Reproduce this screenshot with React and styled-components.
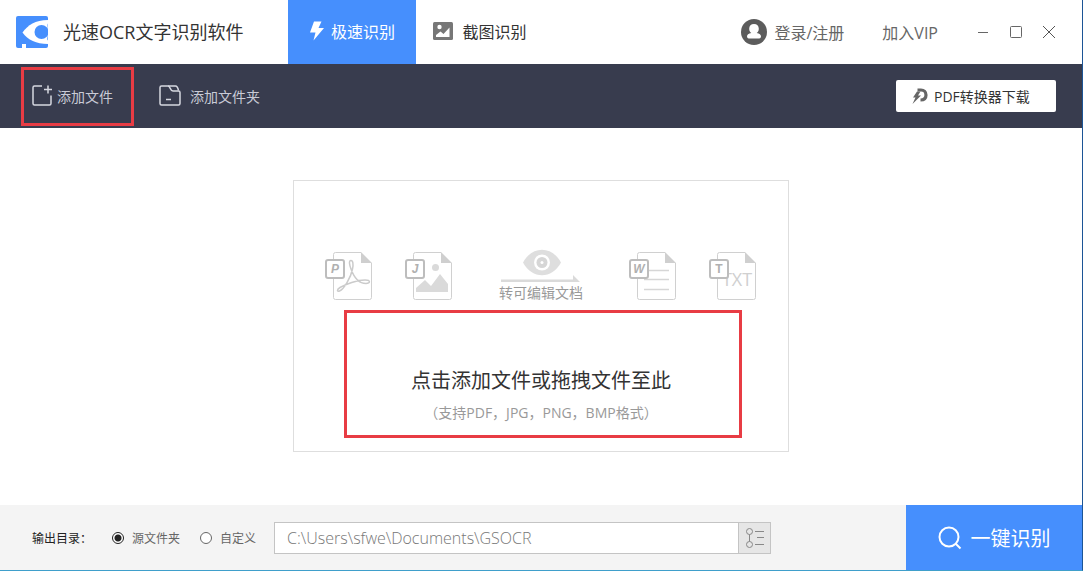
import React, { useState } from 'react';
import styled, { createGlobalStyle } from 'styled-components';

const GlobalStyle = createGlobalStyle`
  * {
    box-sizing: border-box;
  }

  body {
    margin: 0;
    background: #fff;
  }

  body, button, input {
    font-family: 'Open Sans', 'Noto Sans CJK SC', sans-serif;
  }

  button {
    padding: 0;
    border: none;
    background: none;
    cursor: pointer;
  }

  svg {
    display: block;
    flex: none;
  }
`;

const Page = styled.div`
  min-height: 100vh;
  display: flex;
  flex-direction: column;
  background: #fff;
  border-right: 1px solid #1c5596;
  border-bottom: 1px solid #3f9fcb;
`;

const Header = styled.header`
  height: 64px;
  display: flex;
  align-items: center;
  white-space: nowrap;
`;

const Brand = styled.div`
  width: 288px;
  padding-left: 16px;
  display: flex;
  align-items: center;
  gap: 15px;

  h1 {
    margin: 0;
    color: #333;
    font-size: 18px;
    font-weight: 400;
    line-height: 24px;
  }
`;

const Tab = styled.button`
  width: 128px;
  height: 64px;
  padding-bottom: 2px;
  display: flex;
  align-items: center;
  justify-content: center;
  gap: ${(props) => (props.$active ? '6px' : '9px')};
  background: ${(props) => (props.$active ? '#468ffd' : '#fff')};
  color: ${(props) => (props.$active ? '#fff' : '#333')};
  font-size: 16px;
`;

const HeaderRight = styled.div`
  margin-left: auto;
  padding-right: 26px;
  display: flex;
  align-items: center;
  gap: 38px;
`;

const HeaderLink = styled.a`
  display: flex;
  align-items: center;
  gap: 7px;
  color: #666;
  font-size: 16px;
  text-decoration: none;
`;

const WindowButtons = styled.div`
  display: flex;
  gap: 19px;

  button {
    width: 14px;
    height: 14px;
  }
`;

const Toolbar = styled.div`
  height: 64px;
  padding: 0 26px 0 21px;
  display: flex;
  align-items: center;
  background: #383c4e;
  white-space: nowrap;
`;

const ToolButton = styled.button`
  height: 59px;
  padding: 0 18px 1px 8px;
  display: flex;
  align-items: center;
  gap: ${(props) => (props.$marked ? '5px' : '9px')};
  border: 3px solid ${(props) => (props.$marked ? '#e83c44' : 'transparent')};
  color: #c9cbd6;
  font-size: 14px;

  & + & {
    margin-left: 14px;
  }
`;

const DownloadButton = styled.button`
  width: 160px;
  height: 32px;
  margin-left: auto;
  padding: 0 0 1px 16px;
  display: flex;
  align-items: center;
  gap: 5px;
  border-radius: 2px;
  background: #fff;
  color: #333;
  font-size: 14px;
`;

const Main = styled.main`
  flex: 1;
  padding: 24px 24px 26px;
  display: flex;
  align-items: center;
  justify-content: center;
`;

const DropZone = styled.section`
  width: 100%;
  max-width: 496px;
  padding: 68px 0 13px;
  border: 1px solid #dedede;
`;

const Formats = styled.div`
  padding: 0 31px;
  display: flex;
  align-items: center;
  justify-content: space-between;
`;

const FormatGroup = styled.div`
  display: flex;
  gap: 32px;
`;

const Convert = styled.div`
  display: flex;
  flex-direction: column;
  align-items: center;
  color: #999;
  font-size: 14px;
  line-height: 20px;
`;

const Hint = styled.button`
  width: 398px;
  margin: 7px 0 0 50px;
  padding: 54px 4px 12px 0;
  display: flex;
  flex-direction: column;
  align-items: center;
  gap: 8px;
  border: 3px solid #e83c44;

  strong {
    color: #333;
    font-size: 20px;
    font-weight: 400;
    line-height: 28px;
  }

  small {
    color: #999;
    font-size: 14px;
    line-height: 20px;
  }
`;

const Footer = styled.footer`
  height: 65px;
  padding-left: 32px;
  display: flex;
  align-items: center;
  background: #f4f4f4;
  white-space: nowrap;
`;

const Output = styled.fieldset`
  margin: 0;
  padding: 0;
  display: flex;
  align-items: center;
  gap: 20px;
  border: none;
  color: #222;
  font-size: 12px;
`;

const Radio = styled.label`
  display: flex;
  align-items: center;
  gap: 8px;
  color: #666;

  input {
    appearance: none;
    width: 12px;
    height: 12px;
    margin: 0;
    border: 1px solid #666;
    border-radius: 50%;
    background: #fff;
  }

  input:checked {
    border-color: #222;
    background: radial-gradient(circle, #222 3px, #fff 4px);
  }
`;

const PathField = styled.div`
  flex: 1;
  height: 32px;
  margin: 0 135px 0 18px;
  display: flex;
  border: 1px solid #c4c4c4;

  input {
    flex: 1;
    min-width: 0;
    padding: 0 12px;
    border: none;
    outline: none;
    background: #fff;
    color: #777;
    font-size: 16px;
    font-weight: 300;
  }

  button {
    width: 32px;
    display: flex;
    align-items: center;
    justify-content: center;
    border-left: 1px solid #c4c4c4;
    background: #e6e6e6;
  }
`;

const StartButton = styled.button`
  width: 176px;
  height: 65px;
  display: flex;
  align-items: center;
  justify-content: center;
  gap: 9px;
  background: #468ffd;
  color: #fff;
  font-size: 20px;
`;

const Logo = () => (
  <svg width="32" height="32" viewBox="0 0 32 32">
    <rect width="32" height="32" rx="2" fill="#468ffd" />
    <path d="M6.500 16.500C12 9 19 4 32 4V28C20 28 12 24 6.500 16.500Z" fill="#fff" />
    <path d="M32 7.500V24.500C30.500 23 32 21 32 16C32 11 31 9 32 7.500Z" fill="#468ffd" />
    <circle cx="25.500" cy="16" r="7" fill="#468ffd" />
    <path d="M6 28h4v4H6z" fill="#fff" />
  </svg>
);

const BoltIcon = () => (
  <svg width="16" height="20" viewBox="0 0 16 20" fill="#fff">
    <path d="M5 0.500H12.500L9.500 7H15L4.500 19.500L6.500 11.500H1Z" />
  </svg>
);

const PictureIcon = () => (
  <svg width="20" height="18" viewBox="0 0 20 18">
    <rect width="20" height="18" rx="1.500" fill="#777" />
    <circle cx="6.500" cy="5" r="2.200" fill="#fff" />
    <path d="M3 15V13L7.500 9.500L10.500 12L16.500 5.500V15Z" fill="#fff" />
  </svg>
);

const UserIcon = () => (
  <svg width="26" height="26" viewBox="0 0 26 26">
    <circle cx="13" cy="13" r="13" fill="#5c5c5c" />
    <path d="M13 5C16 5 17.800 7 17.800 9.700C17.800 11.700 17 13.200 15.700 14C18.500 14.600 20 15.800 20 17.500C20 19.200 18.500 19.500 17 19.500H9C7.500 19.500 6 19.200 6 17.500C6 15.800 7.500 14.600 10.300 14C9 13.200 8.200 11.700 8.200 9.700C8.200 7 10 5 13 5Z" fill="#fff" />
  </svg>
);

const AddFileIcon = () => (
  <svg width="20" height="21" viewBox="0 0 20 21" fill="none" stroke="#d5d7e0" strokeWidth="1.500">
    <path d="M10 1H2.500Q1 1 1 2.500V18.500Q1 20 2.500 20H17.500Q19 20 19 18.500V10.500" />
    <path d="M16 0.500V8.500M12 4.500H20" />
  </svg>
);

const FolderIcon = () => (
  <svg width="22" height="21" viewBox="0 0 22 21" fill="none" stroke="#d5d7e0" strokeWidth="1.500">
    <path d="M9 1H2.500Q1 1 1 2.500V18.500Q1 20 2.500 20H19.500Q21 20 21 18.500V7.500Q21 6 19.500 6H14C11 6 11.500 1 9 1Z" />
    <path d="M9 1H16.500Q18.500 1 19.500 5.500M7 14.500H12" />
  </svg>
);

const ConverterIcon = () => (
  <svg width="17" height="17" viewBox="0 0 17 17">
    <path d="M5.500 3H9C12 3 14 5 14 8C14 11 12 13 8.500 13" fill="none" stroke="#666" strokeWidth="3.200" />
    <path d="M5 4.500H8.500L6 8.500H9L0.500 17L3.500 10.500H1Z" fill="#666" />
  </svg>
);

const FileIcon = ({ letter, italic, children }) => (
  <svg width="48" height="48" viewBox="0 0 48 48" fill="none">
    <path d="M36 0.500H10.500Q8.500 0.500 8.500 2.500V45.500Q8.500 47.500 10.500 47.500H44.500Q46.500 47.500 46.500 45.500V11" stroke="#d0d0d0" />
    <path d="M36 0L47 11H36Z" fill="#cfcfcf" />
    {children}
    <rect x="1" y="8" width="18" height="18" rx="2" fill="#fff" stroke="#bdbdbd" strokeWidth="2" />
    <text
      x="10"
      y="21"
      textAnchor="middle"
      fill="#b0b0b0"
      fontFamily="Liberation Sans, sans-serif"
      fontSize="12"
      fontWeight="bold"
      fontStyle={italic ? 'italic' : 'normal'}
    >
      {letter}
    </text>
  </svg>
);

const EyeIcon = () => (
  <svg width="80" height="34" viewBox="0 0 80 34">
    <path d="M22 13.500C31 -3.500 51 -3.500 60 13.500C51 30.500 31 30.500 22 13.500Z" fill="#dedede" />
    <circle cx="41" cy="13.500" r="8" fill="#fff" />
    <circle cx="41" cy="13.500" r="5.500" fill="#d6d6d6" />
    <circle cx="41" cy="13.500" r="1.500" fill="#fff" />
    <path d="M0 30.500H72V26L79 33H0Z" fill="#dadada" />
  </svg>
);

const ListIcon = () => (
  <svg width="20" height="20" viewBox="0 0 20 20" fill="none" stroke="#888">
    <circle cx="4.500" cy="3.500" r="3" />
    <circle cx="4.500" cy="16.500" r="3" />
    <path d="M4.500 6.500V13.500M10 3.500H19M12 9.500H19M10 16.500H19" />
  </svg>
);

const SearchIcon = () => (
  <svg width="24" height="24" viewBox="0 0 24 24" fill="none" stroke="#fff" strokeWidth="2">
    <circle cx="11" cy="11" r="9.500" />
    <path d="M17.500 17.500L22.500 22.500" />
  </svg>
);

const App = () => {
  const [tab, setTab] = useState('fast');
  const [output, setOutput] = useState('source');
  const [path, setPath] = useState('C:\\Users\\sfwe\\Documents\\GSOCR');

  return (
    <>
      <GlobalStyle />
      <Page>
        <Header>
          <Brand>
            <Logo />
            <h1>光速OCR文字识别软件</h1>
          </Brand>
          <Tab $active={tab === 'fast'} onClick={() => setTab('fast')}>
            <BoltIcon />
            极速识别
          </Tab>
          <Tab $active={tab === 'shot'} onClick={() => setTab('shot')}>
            <PictureIcon />
            截图识别
          </Tab>
          <HeaderRight>
            <HeaderLink href="#login">
              <UserIcon />
              登录/注册
            </HeaderLink>
            <HeaderLink href="#vip">加入VIP</HeaderLink>
            <WindowButtons>
              <button aria-label="最小化">
                <svg width="14" height="14" stroke="#666"><path d="M2 7.500H12" /></svg>
              </button>
              <button aria-label="最大化">
                <svg width="14" height="14" stroke="#666" fill="none"><rect x="1.500" y="1.500" width="11" height="11" rx="1" /></svg>
              </button>
              <button aria-label="关闭">
                <svg width="14" height="14" stroke="#555"><path d="M1 1L13 13M13 1L1 13" /></svg>
              </button>
            </WindowButtons>
          </HeaderRight>
        </Header>

        <Toolbar>
          <ToolButton $marked>
            <AddFileIcon />
            添加文件
          </ToolButton>
          <ToolButton>
            <FolderIcon />
            添加文件夹
          </ToolButton>
          <DownloadButton>
            <ConverterIcon />
            PDF转换器下载
          </DownloadButton>
        </Toolbar>

        <Main>
          <DropZone>
            <Formats>
              <FormatGroup>
                <FileIcon letter="P" italic>
                  <path d="M26 8.500C23.500 8.500 24.500 13 26 17C28.500 24 33 31.500 41 31.500C45.500 31.500 46 28 40 28C32 28 21 32 15 35.500C11.500 37.500 12 40 14.500 39C19 37.500 26 25 27.500 17C28.500 12 28 8.500 26 8.500Z" stroke="#cbcbcb" strokeWidth="1.500" />
                </FileIcon>
                <FileIcon letter="J" italic>
                  <circle cx="30.500" cy="15.500" r="3.500" fill="#dadada" />
                  <path d="M11 40V36L20 28L26 34L35 22L43 32V40Z" fill="#dadada" />
                </FileIcon>
              </FormatGroup>
              <Convert>
                <EyeIcon />
                转可编辑文档
              </Convert>
              <FormatGroup>
                <FileIcon letter="W" italic>
                  <path d="M20 18.500H40M15 27.500H40M15 37.500H40" stroke="#d6d6d6" strokeWidth="1.500" />
                </FileIcon>
                <FileIcon letter="T">
                  <text x="28" y="34" textAnchor="middle" fill="#d0d0d0" fontFamily="Open Sans, sans-serif" fontSize="18">TXT</text>
                </FileIcon>
              </FormatGroup>
            </Formats>
            <Hint>
              <strong>点击添加文件或拖拽文件至此</strong>
              <small>（支持PDF，JPG，PNG，BMP格式）</small>
            </Hint>
          </DropZone>
        </Main>

        <Footer>
          <Output>
            <span>输出目录：</span>
            <Radio>
              <input type="radio" name="output" checked={output === 'source'} onChange={() => setOutput('source')} />
              源文件夹
            </Radio>
            <Radio>
              <input type="radio" name="output" checked={output === 'custom'} onChange={() => setOutput('custom')} />
              自定义
            </Radio>
          </Output>
          <PathField>
            <input type="text" aria-label="输出目录" value={path} onChange={(e) => setPath(e.target.value)} />
            <button aria-label="选择目录">
              <ListIcon />
            </button>
          </PathField>
          <StartButton>
            <SearchIcon />
            一键识别
          </StartButton>
        </Footer>
      </Page>
    </>
  );
};

export default App;
